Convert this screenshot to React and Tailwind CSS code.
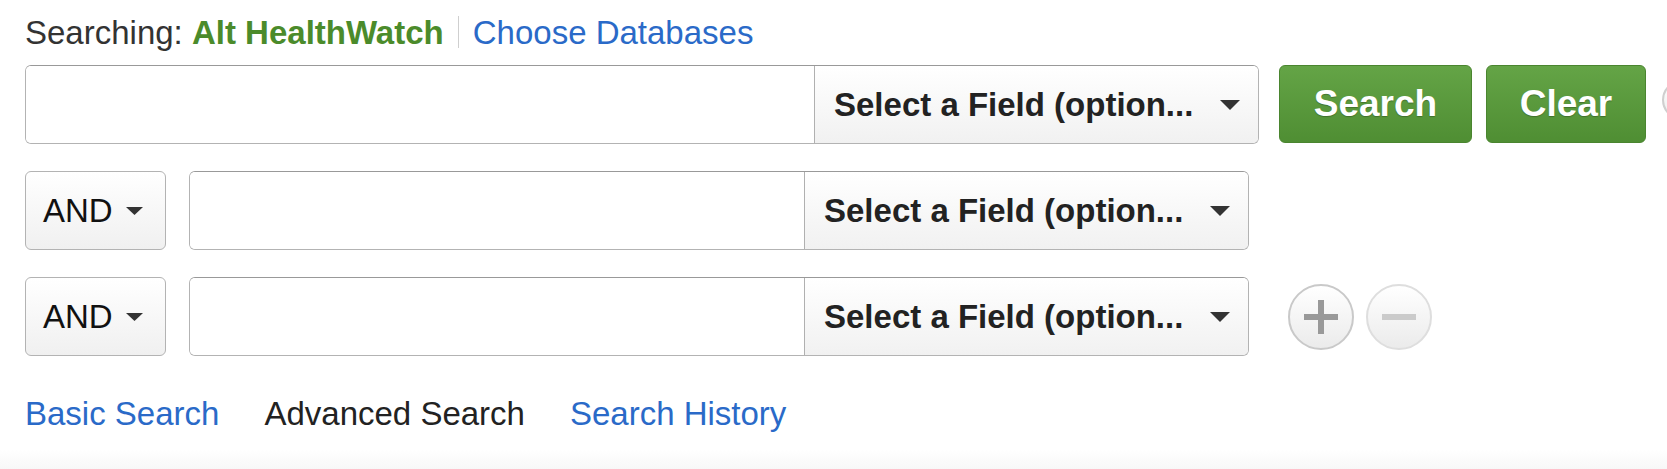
import React from 'react';

const font = "font-['Liberation_Sans',Arial,Helvetica,sans-serif]";

function Caret({ w = 20, h = 10 }) {
  return (
    <svg width={w} height={h} viewBox={`0 0 ${w} ${h}`} className="shrink-0">
      <polygon points={`0,0 ${w},0 ${w / 2},${h}`} fill="#333" />
    </svg>
  );
}

function FieldSelect() {
  return (
    <div className="flex h-full w-[444px] shrink-0 items-center justify-between border-l border-[#b0b0b0] bg-gradient-to-b from-white to-[#f1f1f1] pl-[19px] pr-[18px]">
      <span className="text-[33px] font-bold leading-none text-[#222]">Select a Field (option...</span>
      <Caret w={20} h={10} />
    </div>
  );
}

function QueryBox({ width }) {
  return (
    <div
      className={`flex h-[79px] shrink-0 overflow-hidden rounded-[6px] border border-[#b3b3b3] border-t-[#999] bg-white ${width}`}
    >
      <input className="h-full min-w-0 flex-1 bg-white px-3 text-[33px] outline-none" />
      <FieldSelect />
    </div>
  );
}

function BoolSelect() {
  return (
    <div className="flex h-[79px] w-[141px] shrink-0 items-center rounded-[6px] border border-[#b3b3b3] bg-gradient-to-b from-white to-[#f0f0f0] pl-[17px]">
      <span className="text-[33px] leading-none text-[#111]">AND</span>
      <span className="ml-[13px]">
        <Caret w={17} h={8} />
      </span>
    </div>
  );
}

function RoundButton({ kind }) {
  const plus = kind === 'plus';
  return (
    <div
      className={`flex h-[66px] w-[66px] items-center justify-center rounded-full border-2 bg-gradient-to-b from-white to-[#ebebeb] ${
        plus ? 'border-[#c9c9c9]' : 'border-[#dedede]'
      }`}
    >
      <svg width="34" height="34" viewBox="0 0 34 34">
        <rect x="0" y="14" width="34" height="6" fill={plus ? '#999' : '#cbcbcb'} />
        {plus && <rect x="14" y="0" width="6" height="34" fill="#999" />}
      </svg>
    </div>
  );
}

export default function App() {
  return (
    <div className={`h-[469px] w-full overflow-hidden bg-white ${font}`}>
      <div className="flex flex-col pl-[25px] pt-[12px]">
        <div className="flex h-[40px] items-center text-[33px] leading-none">
          <span className="text-[#333]">Searching:&nbsp;</span>
          <span className="font-bold text-[#4b8b2b]">Alt HealthWatch</span>
          <span className="mx-[14px] h-[32px] w-px bg-[#cfcfcf]" />
          <a className="text-[#2a6ac8]">Choose Databases</a>
        </div>

        <div className="mt-[13px] flex items-start">
          <QueryBox width="w-[1234px]" />
          <button className="ml-[20px] h-[78px] w-[193px] shrink-0 rounded-[6px] border border-[#4a852f] bg-gradient-to-b from-[#64a446] to-[#4f8e33] text-[37px] font-bold text-white [text-shadow:0_1px_1px_rgba(0,0,0,0.25)]">
            Search
          </button>
          <button className="ml-[14px] h-[78px] w-[160px] shrink-0 rounded-[6px] border border-[#4a852f] bg-gradient-to-b from-[#64a446] to-[#4f8e33] text-[37px] font-bold text-white [text-shadow:0_1px_1px_rgba(0,0,0,0.25)]">
            Clear
          </button>
          <div className="ml-[16px] mt-[15px] h-[40px] w-[40px] shrink-0 rounded-full border-2 border-[#cfcfcf] bg-gradient-to-b from-white to-[#ececec]" />
        </div>

        <div className="mt-[27px] flex items-center">
          <BoolSelect />
          <div className="ml-[23px]">
            <QueryBox width="w-[1060px]" />
          </div>
        </div>

        <div className="mt-[27px] flex items-center">
          <BoolSelect />
          <div className="ml-[23px]">
            <QueryBox width="w-[1060px]" />
          </div>
          <div className="ml-[39px] flex items-center gap-[12px]">
            <RoundButton kind="plus" />
            <RoundButton kind="minus" />
          </div>
        </div>

        <div className="mt-[37px] flex h-[40px] items-center gap-[45px] text-[33px] leading-none">
          <a className="text-[#2a6ac8]">Basic Search</a>
          <span className="text-[#222]">Advanced Search</span>
          <a className="text-[#2a6ac8]">Search History</a>
        </div>
      </div>
      <div className="mt-[17px] h-[30px] bg-gradient-to-b from-white to-[#f3f3f3]" />
    </div>
  );
}
